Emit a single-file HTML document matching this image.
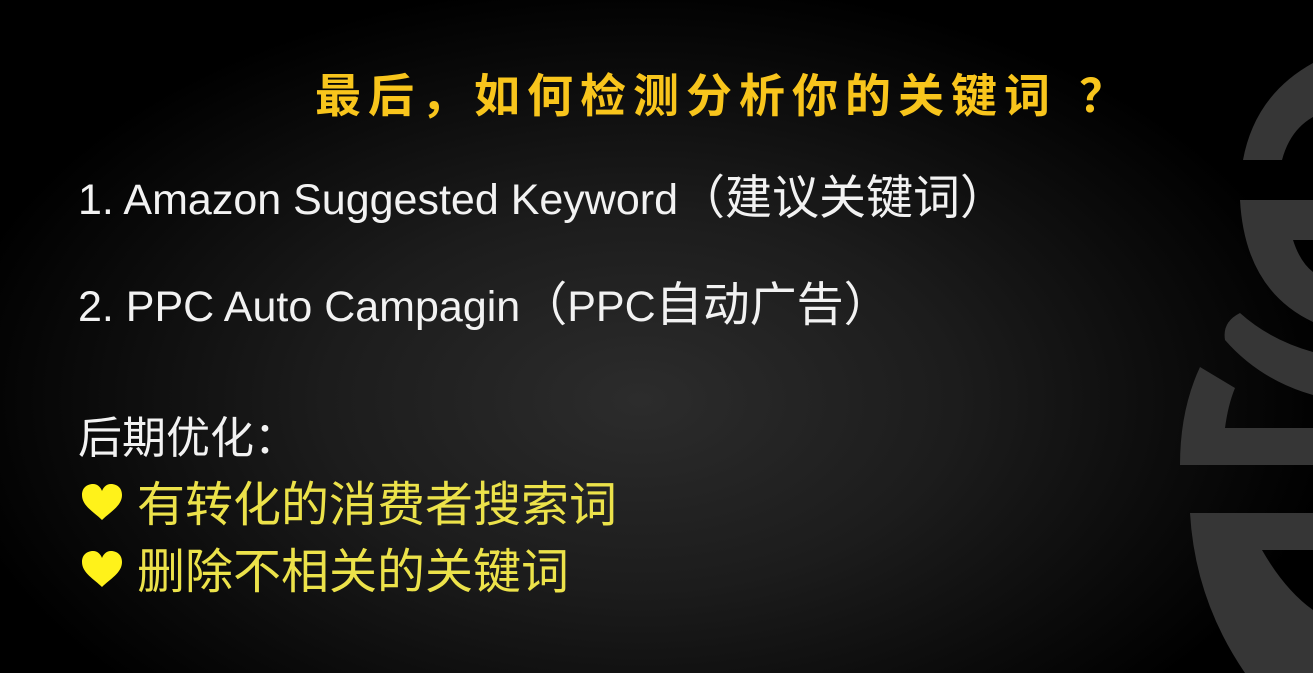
<!DOCTYPE html>
<html><head><meta charset="utf-8"><style>
html,body{margin:0;padding:0;}
body{width:1313px;height:673px;overflow:hidden;position:relative;
background:radial-gradient(ellipse 700px 420px at 640px 400px,#2c2c2c 0%,#1c1c1c 45%,#0a0a0a 80%,#000 100%);
font-family:"Liberation Sans","Noto Sans CJK SC",sans-serif;}
.t{position:absolute;white-space:nowrap;}
#title{left:315px;top:65px;font-size:46px;font-weight:bold;color:#f8c51c;letter-spacing:7px;line-height:56px;font-family:"Noto Sans CJK SC",sans-serif;}
.l{color:#f2f2f2;font-size:43px;line-height:50px;}
.l .c{font-size:47px;font-family:"Noto Sans CJK SC",sans-serif;}
.y{color:#ece24a;font-size:48px;line-height:56px;left:137px;font-family:"Noto Sans CJK SC",sans-serif;}
.h{position:absolute;left:80px;width:44px;height:40px;}
</style></head><body>
<svg width="1313" height="673" style="position:absolute;left:0;top:0" fill="#363636">
<path d="M1243,160 Q1255,95 1313,63 L1313,117 Q1290,130 1282,160 Z"/>
<path d="M1240,200 L1313,200 L1313,240 L1293,240 Q1300,262 1313,272 L1313,322 Q1245,290 1240,200 Z"/>
<path d="M1240,313 Q1270,340 1313,352 L1313,395 Q1260,380 1225,340 Q1222,322 1240,313 Z"/>
<path d="M1200,367 L1235,388 Q1228,405 1225,428 L1313,428 L1313,465 L1180,465 Q1180,410 1200,367 Z"/>
<path d="M1190,513 L1313,513 L1313,550 L1262,550 Q1285,590 1313,610 L1313,673 L1245,673 Q1195,600 1190,513 Z"/>
</svg>
<div class="t" id="title">最后，如何检测分析你的关键词<span style="padding-left:22px">？</span></div>
<div class="t l" style="left:78px;top:169px;">1. Amazon Suggested Keyword<span class="c">（建议关键词）</span></div>
<div class="t l" style="left:78px;top:276px;">2. PPC Auto Campagin<span class="c">（</span>PPC<span class="c">自动广告）</span></div>
<div class="t l" style="left:78px;top:406px;font-size:44px;line-height:56px;font-family:'Noto Sans CJK SC',sans-serif;">后期优化：</div>
<svg class="h" style="top:482px" viewBox="0 0 44 40"><path d="M22,38 C14,30 2,24 2,13 C2,5 8,2 13,2 C18,2 21,6 22,9 C23,6 26,2 31,2 C36,2 42,5 42,13 C42,24 30,30 22,38 Z" fill="#fff21a"/></svg>
<div class="t y" style="top:472px;">有转化的消费者搜索词</div>
<svg class="h" style="top:549px" viewBox="0 0 44 40"><path d="M22,38 C14,30 2,24 2,13 C2,5 8,2 13,2 C18,2 21,6 22,9 C23,6 26,2 31,2 C36,2 42,5 42,13 C42,24 30,30 22,38 Z" fill="#fff21a"/></svg>
<div class="t y" style="top:539px;">删除不相关的关键词</div>
</body></html>
